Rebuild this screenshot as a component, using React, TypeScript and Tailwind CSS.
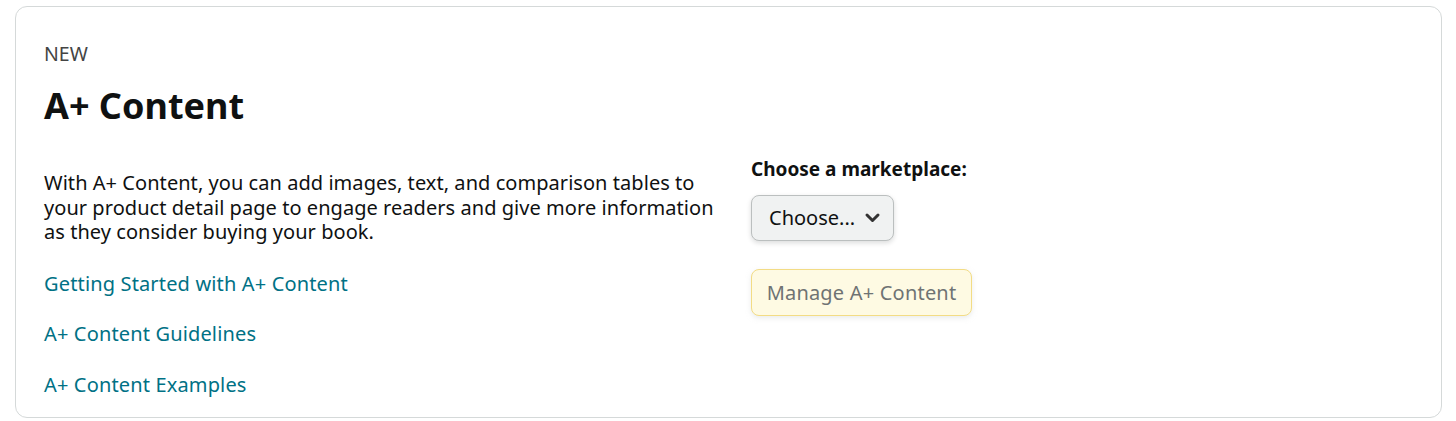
import React from "react";

export default function App() {
  const font = { fontFamily: '"Noto Sans", "Open Sans", Arial, sans-serif' };
  return (
    <div className="w-[1456px] h-[421px] bg-white pt-[6px] pl-[15px]" style={font}>
      <div className="w-[1427px] h-[412px] border border-[#d5d9d9] rounded-[12px] pl-[28px] pt-[35px]">
        <div className="text-[19.5px] leading-[24px] text-[#444]">NEW</div>
        <h1 className="mt-[17px] text-[36px] leading-[46px] font-bold text-[#0f1111]">A+ Content</h1>
        <div className="flex mt-[28px]">
          <div className="w-[707px] pt-[14px]">
            <p className="w-[690px] text-[20px] leading-[24.5px] text-[#0f1111] tracking-[0.05px]">
              With A+ Content, you can add images, text, and comparison tables to your product detail page to engage readers and give more information as they consider buying your book.
            </p>
            <div className="mt-[27px] flex flex-col gap-[26.5px] text-[20px] leading-[24px] text-[#007185] tracking-[0.15px]">
              <a href="#">Getting Started with A+ Content</a>
              <a href="#">A+ Content Guidelines</a>
              <a href="#">A+ Content Examples</a>
            </div>
          </div>
          <div className="flex flex-col items-start">
            <div className="text-[19px] leading-[24px] font-bold text-[#0f1111]">Choose a marketplace:</div>
            <button className="mt-[14px] h-[46px] w-[143px] flex items-center pl-[17px] pr-[12px] rounded-[8px] border border-[#bbbfbf] bg-[#f0f2f2] shadow-[0_2px_5px_rgba(15,17,17,0.15)] text-[20px] text-[#0f1111]">
              <span>Choose...</span>
              <svg width="17" height="12" viewBox="0 0 17 12" className="ml-auto">
                <path d="M3 3 L8.5 8.5 L14 3" fill="none" stroke="#333" strokeWidth="3" strokeLinecap="round" strokeLinejoin="round" />
              </svg>
            </button>
            <button className="mt-[28px] h-[47px] w-[221px] flex items-center justify-center rounded-[8px] border border-[#f3dc85] bg-[#fefae3] shadow-[0_2px_5px_rgba(213,217,217,0.5)] text-[20px] text-[#6f7373] tracking-[0.2px]">
              Manage A+ Content
            </button>
          </div>
        </div>
      </div>
    </div>
  );
}
